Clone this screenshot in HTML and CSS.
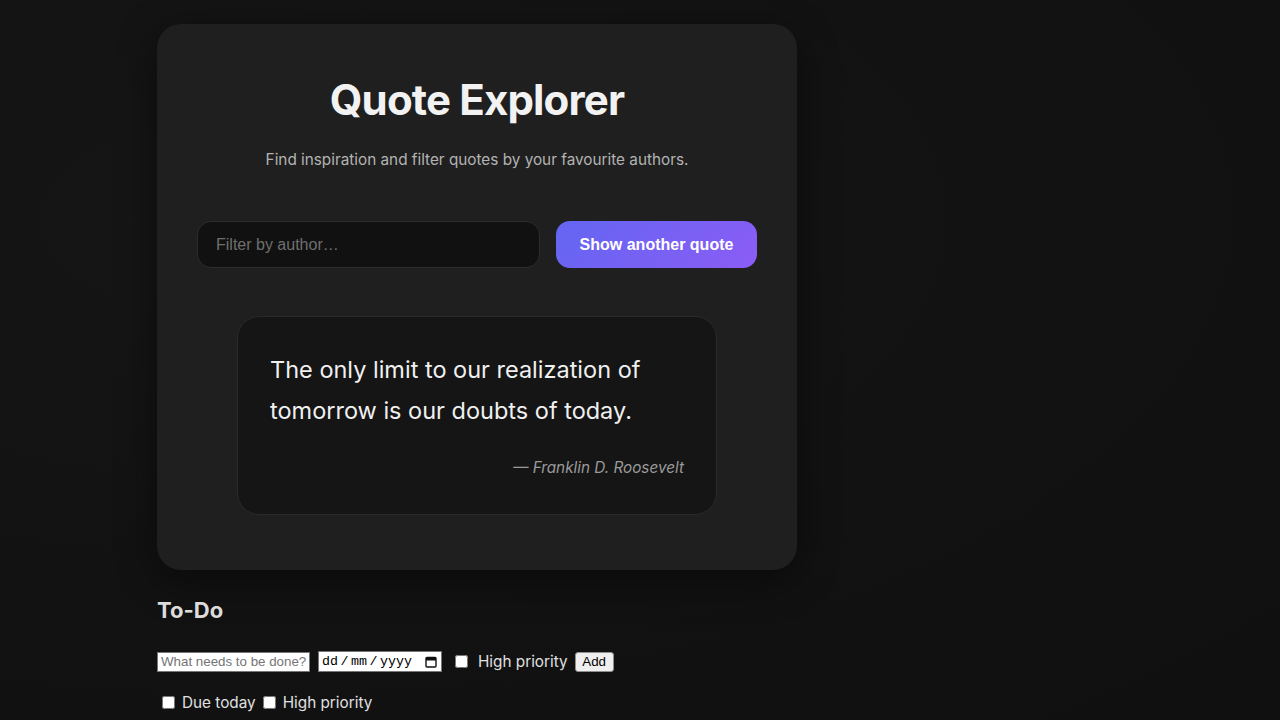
FILE: index.html
```html
<!DOCTYPE html>
<html lang="en-GB">
<head>
<meta charset="utf-8">
<title>Quote Explorer</title>
<link rel="stylesheet" href="styles.css">
</head>
<body>
<main class="page">
  <section class="card">
    <h1 class="title">Quote Explorer</h1>
    <p class="subtitle">Find inspiration and filter quotes by your favourite authors.</p>
    <div class="controls">
      <input class="filter" type="text" placeholder="Filter by author…">
      <button class="next-btn" type="button">Show another quote</button>
    </div>
    <figure class="quote">
      <blockquote class="quote-text">The only limit to our realization of tomorrow is our doubts of today.</blockquote>
      <figcaption class="quote-author">— Franklin D. Roosevelt</figcaption>
    </figure>
  </section>
  <section class="todo">
    <h2 class="todo-title">To-Do</h2>
    <form class="todo-form">
      <input class="task-input" type="text" placeholder="What needs to be done?">
      <label class="date-field">
        <span class="date-text">dd<span class="sep">/</span>mm<span class="sep">/</span>yyyy</span>
        <svg class="cal-icon" width="12" height="12" viewBox="0 0 12 12" aria-hidden="true">
          <rect x="1" y="1.5" width="10" height="9.5" rx="1" fill="none" stroke="#111" stroke-width="1.4"/>
          <rect x="1" y="1.5" width="10" height="3" fill="#111"/>
        </svg>
      </label>
      <label class="check"><input type="checkbox"> High priority</label>
      <button class="add-btn" type="button">Add</button>
    </form>
    <div class="todo-filters">
      <label class="check"><input type="checkbox"> Due today</label>
      <label class="check"><input type="checkbox"> High priority</label>
    </div>
  </section>
</main>
</body>
</html>
```
FILE: styles.css
```css
html, body {
  margin: 0;
  padding: 0;
}
body {
  background: radial-gradient(ellipse at 20% 30%, #161616 0%, #121212 50%, #101010 100%);
  min-height: 100vh;
  font-family: Inter, "Noto Sans", sans-serif;
  color: #e6e6e6;
}
.page {
  width: 640px;
  margin-left: 157px;
  padding-top: 24px;
}
.card {
  background: #1f1f1f;
  border-radius: 24px;
  padding: 40px 40px 55px;
  box-shadow: 0 10px 40px rgba(0, 0, 0, 0.45);
  text-align: center;
}
.title {
  margin: 13px 0 0;
  font-size: 42px;
  line-height: 46px;
  font-weight: 700;
  letter-spacing: -0.02em;
  color: #f2f2f2;
}
.subtitle {
  margin: 28px 0 0;
  font-size: 15.3px;
  line-height: 18px;
  color: #b3b3b3;
}
.controls {
  display: flex;
  gap: 16px;
  margin-top: 52px;
}
.filter {
  flex: 1;
  height: 47px;
  box-sizing: border-box;
  background: #111111;
  border: 1px solid #2c2c2c;
  border-radius: 14px;
  padding: 0 18px;
  font-family: "Liberation Sans", Arial, sans-serif;
  font-size: 16px;
  color: #ddd;
  outline: none;
}
.filter::placeholder {
  color: #6f6f6f;
}
.next-btn {
  width: 201px;
  height: 47px;
  border: none;
  border-radius: 14px;
  background: linear-gradient(135deg, #6366f1, #8b5cf6);
  color: #fff;
  font-family: "Liberation Sans", Arial, sans-serif;
  font-weight: 700;
  font-size: 16px;
  cursor: pointer;
}
.quote {
  width: 480px;
  box-sizing: border-box;
  margin: 48px auto 0;
  background: #151515;
  border: 1px solid #2a2a2a;
  border-radius: 22px;
  padding: 32px 32px 37px;
  text-align: left;
}
.quote-text {
  margin: 0;
  font-size: 23.5px;
  line-height: 41px;
  color: #f0f0f0;
}
.quote-author {
  margin-top: 28px;
  text-align: right;
  font-style: italic;
  font-size: 15.3px;
  line-height: 18px;
  color: #9a9a9a;
}
.todo-title {
  margin: 27px 0 0;
  font-size: 22px;
  line-height: 27px;
  font-weight: 700;
  color: #dcdcdc;
}
.todo-form {
  margin-top: 27px;
  display: flex;
  align-items: center;
  gap: 8px;
  height: 21px;
}
.task-input {
  width: 153px;
  height: 20px;
  box-sizing: border-box;
  padding: 1px 3px;
  font-family: "Liberation Sans", Arial, sans-serif;
  font-size: 13.33px;
  border: 1px solid #767676;
  border-radius: 0;
  background: #fff;
}
.task-input::placeholder {
  color: #757575;
}
.date-field {
  width: 124px;
  height: 21px;
  box-sizing: border-box;
  display: inline-flex;
  align-items: center;
  justify-content: space-between;
  padding: 0 4px 0 3px;
  background: #fff;
  border: 1px solid #767676;
  color: #000;
  font-family: "Liberation Mono", monospace;
  font-size: 13.33px;
}
.sep {
  margin: 0 2.5px;
}
.check {
  font-size: 15.3px;
  line-height: 19px;
  color: #e0e0e0;
  display: inline-flex;
  align-items: center;
}
.check input {
  width: 13px;
  height: 13px;
  margin: 0 10px 0 5px;
}
.add-btn {
  height: 20px;
  width: 39px;
  margin-left: -1px;
  padding: 0;
  font-family: "Liberation Sans", Arial, sans-serif;
  font-size: 13.33px;
  color: #000;
  background: #efefef;
  border: 1px solid #8f8f8f;
  border-radius: 3px;
}
.todo-filters {
  margin-top: 21px;
  display: flex;
  gap: 7px;
}
.todo-filters .check input {
  margin: 0 7px 0 5px;
}
.todo-filters .check + .check input {
  margin-left: 0;
}
```
